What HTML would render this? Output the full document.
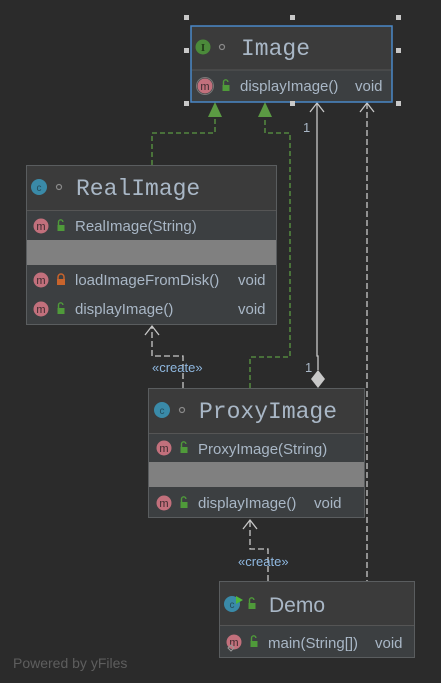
<!DOCTYPE html>
<html><head><meta charset="utf-8"><style>
html,body{margin:0;padding:0;background:#2b2b2b;}
svg{display:block}
.t{font-family:"Liberation Sans",sans-serif;fill:#a9b7c6;font-size:15px}
.h{font-family:"Liberation Mono",monospace;fill:#a9b7c6;font-size:23px}
</style></head><body>
<svg width="441" height="683" viewBox="0 0 441 683" xmlns="http://www.w3.org/2000/svg">
<defs>
<g id="m"><circle cx="0" cy="0" r="7.5" fill="#c2707c"/><text x="0" y="4" text-anchor="middle" font-family="Liberation Sans,sans-serif" font-size="11" fill="#3c2a2e">m</text></g>
<g id="u"><rect x="-3.5" y="-1" width="7" height="6" fill="#4f9a3a"/><path d="M-2.5,-1 v-3 a2.2,2.2 0 0 1 4.4,0" stroke="#4f9a3a" stroke-width="1.4" fill="none"/></g>
<g id="c"><circle cx="0" cy="0" r="8" fill="#3a8aa8"/><text x="0" y="4" text-anchor="middle" font-family="Liberation Sans,sans-serif" font-size="10" fill="#244e5e">c</text></g>
</defs>
<rect width="441" height="683" fill="#2b2b2b"/>

<g fill="none" stroke-width="1.3">
<path d="M152,165 V133 H215 V116" stroke="#5b9a43" stroke-dasharray="5,3"/>
<path d="M250,388 V357 H290 V133 H265 V116" stroke="#5b9a43" stroke-dasharray="5,3"/>
<path d="M317,103 V356 H318 V370" stroke="#c8c8c8"/>
<path d="M367,103 V581" stroke="#c8c8c8" stroke-dasharray="6,3"/>
<path d="M183,388 V356 H152 V326" stroke="#c8c8c8" stroke-dasharray="6,3"/>
<path d="M268,581 V549 H250 V520" stroke="#c8c8c8" stroke-dasharray="6,3"/>
<path d="M310,112 L317,103 L324,112 M360,112 L367,103 L374,112 M145,335 L152,326 L159,335 M243,529 L250,520 L257,529" stroke="#c8c8c8"/>
</g>
<path d="M215,102 L222,117 H208 Z M265,102 L272,117 H258 Z" fill="#5b9a43"/>
<path d="M318,370 L325,379 L318,388 L311,379 Z" fill="#c8c8c8"/>
<text x="303" y="132" class="t" font-size="12" style="font-size:13px">1</text>
<text x="305" y="372" class="t" style="font-size:13px">1</text>
<text x="152" y="372" class="t" style="fill:#8fb8e0;font-size:13px">«create»</text>
<text x="238" y="566" class="t" style="fill:#8fb8e0;font-size:13px">«create»</text>

<!-- Image -->
<rect x="191" y="26" width="201" height="76" fill="#3c3f41" stroke="#4a88c7" stroke-width="1.5"/>
<rect x="192" y="27" width="199" height="43" fill="#3b3b3b"/>
<line x1="192" y1="70" x2="391" y2="70" stroke="#555"/>
<circle cx="203" cy="47" r="7.5" fill="#4b8a3a"/><text x="203" y="51" text-anchor="middle" font-family="Liberation Serif,serif" font-size="11" fill="#203a18" font-weight="bold">I</text>
<circle cx="222" cy="47" r="2.5" fill="none" stroke="#8a8a8a" stroke-width="1.2"/>
<text x="241" y="55" class="h">Image</text>
<circle cx="205" cy="86" r="8.5" fill="none" stroke="#777" stroke-width="1"/>
<use href="#m" x="205" y="86"/>
<use href="#u" x="226" y="86"/>
<text x="240" y="91" class="t">displayImage()</text><text x="355" y="91" class="t">void</text>
<g fill="#c8c8c8"><rect x="184" y="15" width="5" height="5"/><rect x="290" y="15" width="5" height="5"/><rect x="396" y="15" width="5" height="5"/><rect x="184" y="48" width="5" height="5"/><rect x="396" y="48" width="5" height="5"/><rect x="184" y="101" width="5" height="5"/><rect x="290" y="101" width="5" height="5"/><rect x="396" y="101" width="5" height="5"/></g>

<!-- RealImage -->
<rect x="26.5" y="165.5" width="250" height="159" fill="#3c3f41" stroke="#5a5d5f"/>
<rect x="27" y="166" width="249" height="44" fill="#3b3b3b"/>
<line x1="27" y1="210.5" x2="276" y2="210.5" stroke="#555"/>
<rect x="27" y="240" width="249" height="25" fill="#808080"/>
<use href="#c" x="39" y="187"/>
<circle cx="59" cy="187" r="2.5" fill="none" stroke="#8a8a8a" stroke-width="1.2"/>
<text x="76" y="195" class="h">RealImage</text>
<use href="#m" x="41" y="226"/><use href="#u" x="61" y="226"/>
<text x="75" y="231" class="t">RealImage(String)</text>
<use href="#m" x="41" y="280"/>
<rect x="57" y="279" width="8" height="6" fill="#c8642c"/><path d="M58,279 v-2 a3,3 0 0 1 6,0 v2" stroke="#c8642c" stroke-width="1.5" fill="none"/>
<text x="75" y="285" class="t">loadImageFromDisk()</text><text x="238" y="285" class="t">void</text>
<use href="#m" x="41" y="309"/><use href="#u" x="61" y="309"/>
<text x="75" y="314" class="t">displayImage()</text><text x="238" y="314" class="t">void</text>

<!-- ProxyImage -->
<rect x="148.5" y="388.5" width="216" height="129" fill="#3c3f41" stroke="#5a5d5f"/>
<rect x="149" y="389" width="215" height="44" fill="#3b3b3b"/>
<line x1="149" y1="433.5" x2="364" y2="433.5" stroke="#555"/>
<rect x="149" y="462" width="215" height="25" fill="#808080"/>
<use href="#c" x="162" y="410"/>
<circle cx="182" cy="410" r="2.5" fill="none" stroke="#8a8a8a" stroke-width="1.2"/>
<text x="199" y="418" class="h">ProxyImage</text>
<use href="#m" x="164" y="448"/><use href="#u" x="184" y="448"/>
<text x="198" y="454" class="t">ProxyImage(String)</text>
<use href="#m" x="164" y="503"/><use href="#u" x="184" y="503"/>
<text x="198" y="508" class="t">displayImage()</text><text x="314" y="508" class="t">void</text>

<!-- Demo -->
<rect x="219.5" y="581.5" width="195" height="76" fill="#3c3f41" stroke="#5a5d5f"/>
<rect x="220" y="582" width="194" height="43" fill="#3b3b3b"/>
<line x1="220" y1="625.5" x2="414" y2="625.5" stroke="#555"/>
<use href="#c" x="232" y="604"/>
<path d="M236,596 L243,600 L236,604 Z" fill="#4fb83a"/>
<use href="#u" x="252" y="604"/>
<text x="269" y="612" style="font-family:'Liberation Sans',sans-serif;font-size:21px;fill:#a9b7c6">Demo</text>
<use href="#m" x="234" y="642"/><use href="#u" x="254" y="642"/>
<path d="M228,648 l3,-3 l3,3 l-3,3 z" fill="none" stroke="#999" stroke-width="1"/>
<text x="268" y="648" class="t">main(String[])</text><text x="375" y="648" class="t">void</text>

<text x="13" y="668" style="font-family:'Liberation Sans',sans-serif;font-size:14px;fill:#5e5e5e">Powered by yFiles</text>
</svg>
</body></html>
